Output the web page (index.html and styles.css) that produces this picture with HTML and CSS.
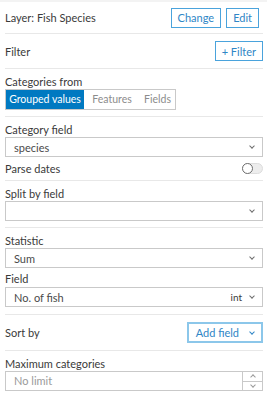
FILE: index.html
```html
<!DOCTYPE html>
<html lang="en">
<head>
    <meta charset="UTF-8">
    <title>Chart settings</title>
    <link rel="stylesheet" href="styles.css">
</head>
<body>
    <div class="panel">
        <div class="row row-layer">
            <span>Layer: Fish Species</span>
            <div class="btn-group">
                <button class="btn">Change</button>
                <button class="btn">Edit</button>
            </div>
        </div>

        <div class="row row-filter">
            <span>Filter</span>
            <button class="btn">+ Filter</button>
        </div>

        <div class="section">
            <div class="label">Categories from</div>
            <div class="segmented">
                <span class="seg seg-grouped seg-active">Grouped values</span>
                <span class="seg seg-features">Features</span>
                <span class="seg seg-fields">Fields</span>
            </div>
        </div>

        <div class="section section-category">
            <div class="label">Category field</div>
            <div class="select">
                <span>species</span>
                <span class="chev"></span>
            </div>
            <div class="toggle-row">
                <span>Parse dates</span>
                <span class="toggle"><span class="knob"></span></span>
            </div>
        </div>

        <div class="section">
            <div class="label">Split by field</div>
            <div class="select">
                <span></span>
                <span class="chev"></span>
            </div>
        </div>

        <div class="section section-stat">
            <div class="label">Statistic</div>
            <div class="select">
                <span>Sum</span>
                <span class="chev"></span>
            </div>
            <div class="label label-field">Field</div>
            <div class="select">
                <span>No. of fish</span>
                <span class="select-end"><span class="type">int</span><span class="chev"></span></span>
            </div>
        </div>

        <div class="row row-sort">
            <span>Sort by</span>
            <button class="btn btn-focus">Add field <span class="chev chev-blue"></span></button>
        </div>

        <div class="section section-last">
            <div class="label">Maximum categories</div>
            <div class="number">
                <span class="placeholder">No limit</span>
                <div class="spin">
                    <span class="spin-btn"><span class="chev chev-up"></span></span>
                    <span class="spin-btn"><span class="chev"></span></span>
                </div>
            </div>
        </div>
    </div>
</body>
</html>
```

FILE: styles.css
```css
body {
    margin: 0;
    padding: 0;
    background-color: #ffffff;
    font-family: Lato, "Open Sans", sans-serif;
    font-size: 11px;
    color: #3a3a3a;
}
.panel {
    border-top: 2px solid #f3f3f3;
    padding: 0 4px 0 5px;
}
.row {
    display: flex;
    justify-content: space-between;
    align-items: center;
    border-bottom: 1px solid #e8e8e8;
}
.row-layer {
    height: 31px;
    padding-right: 4px;
}
.row-filter {
    height: 34px;
}
.row-sort {
    height: 35px;
}
.btn-group {
    display: flex;
    gap: 5px;
}
.btn {
    font-family: inherit;
    font-size: 11px;
    color: #2f86c6;
    background: #ffffff;
    border: 1px solid #4aa3dc;
    height: 20px;
    padding: 0 6px;
    display: flex;
    align-items: center;
    gap: 11px;
}
.btn-focus {
    border: 2px solid #8cc7ea;
    height: 21px;
    padding: 0 7px 0 7px;
}
.section {
    border-bottom: 1px solid #e8e8e8;
    padding: 6px 0 6px;
}
.section-category {
    padding-bottom: 5px;
}
.section-stat {
    padding-bottom: 7px;
}
.section-last {
    border-bottom: none;
    padding-top: 6px;
}
.label {
    line-height: 13px;
    margin-bottom: 1px;
}
.label-field {
    margin-top: 4px;
    margin-bottom: 2px;
}
.segmented {
    display: inline-flex;
    border: 1px solid #c9c9c9;
}
.seg {
    font-size: 10.5px;
    line-height: 19px;
    color: #8c8c8c;
    text-align: center;
}
.seg-grouped {
    width: 78px;
}
.seg-features {
    width: 56px;
}
.seg-fields {
    width: 35px;
}
.seg-active {
    background-color: #0079c1;
    color: #ffffff;
}
.select {
    display: flex;
    justify-content: space-between;
    align-items: center;
    height: 18px;
    border: 1px solid #c9c9c9;
    padding: 0 8px;
    color: #4a4a4a;
}
.select-end {
    display: flex;
    align-items: center;
    gap: 8px;
}
.type {
    font-size: 10px;
    color: #3a3a3a;
}
.chev {
    width: 3px;
    height: 3px;
    border-right: 1px solid #6e6e6e;
    border-bottom: 1px solid #6e6e6e;
    transform: translateY(-1px) rotate(45deg);
    display: inline-block;
}
.chev-blue {
    border-color: #2f86c6;
}
.chev-up {
    transform: translateY(1px) rotate(-135deg);
}
.toggle-row {
    display: flex;
    justify-content: space-between;
    align-items: center;
    margin-top: 5px;
    line-height: 13px;
}
.toggle {
    width: 19px;
    height: 9px;
    border-radius: 6px;
    background-color: #ededed;
    border: 1px solid #dddddd;
    position: relative;
}
.knob {
    position: absolute;
    left: -1px;
    top: -1px;
    width: 9px;
    height: 9px;
    border-radius: 50%;
    background: #ffffff;
    border: 1px solid #6e6e6e;
}
.number {
    display: flex;
    height: 18px;
    border: 1px solid #c9c9c9;
}
.placeholder {
    flex: 1;
    padding: 0 8px;
    line-height: 18px;
    color: #9a9a9a;
}
.spin {
    display: flex;
    flex-direction: column;
    width: 19px;
    border-left: 1px solid #c9c9c9;
}
.spin-btn {
    flex: 1;
    display: flex;
    align-items: center;
    justify-content: center;
}
.spin-btn + .spin-btn {
    border-top: 1px solid #c9c9c9;
}
.spin .chev {
    border-color: #9a9a9a;
}
```
